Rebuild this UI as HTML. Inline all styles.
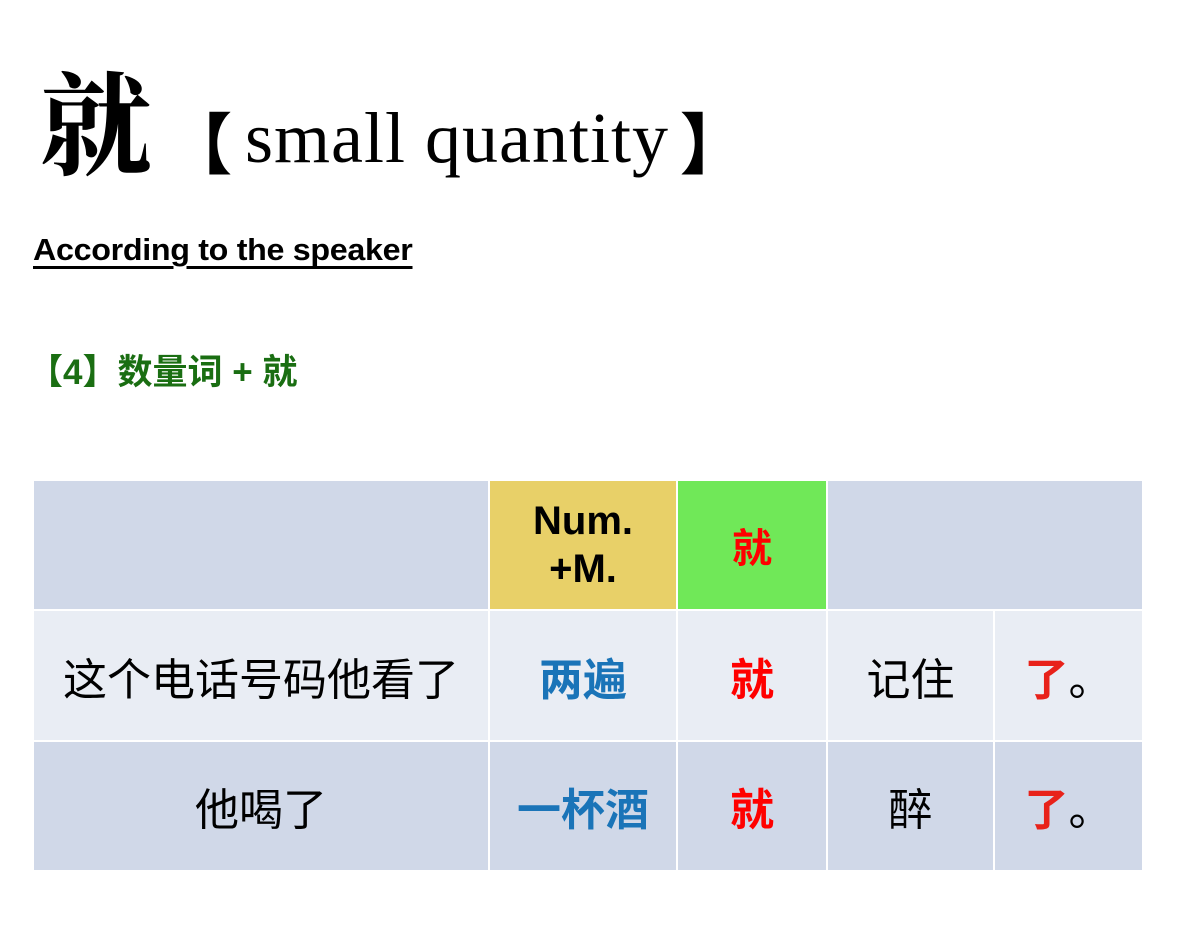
<!DOCTYPE html>
<html><head><meta charset="utf-8"><style>
body{margin:0;width:1182px;height:946px;background:#fff;position:relative;overflow:hidden;font-family:"Liberation Sans","Noto Sans CJK SC",sans-serif}
.a{position:absolute;white-space:nowrap}
.c{position:absolute;display:flex;align-items:center;justify-content:center;text-align:center}
.h{background:#d0d8e8}.l{background:#e9edf4}
.b{color:#1a74b8;font-weight:bold}.r{color:#f00;font-weight:bold}.t{font-size:44px}
</style></head><body>
<div class="a" style="left:40px;top:54px;font-size:112px;line-height:130px;font-family:'Noto Serif CJK SC',serif;font-weight:bold">就</div>
<div class="a" style="left:166px;top:100px;font-size:66px;line-height:80px;font-family:'Noto Sans CJK SC',sans-serif;font-weight:900">【</div>
<div class="a" style="left:245px;top:98px;font-size:72px;line-height:80px;letter-spacing:1px;font-family:'Liberation Serif',serif">small quantity</div>
<div class="a" style="left:680px;top:100px;font-size:66px;line-height:80px;font-family:'Noto Sans CJK SC',sans-serif;font-weight:900">】</div>
<div class="a" style="left:33px;top:232px;font-size:31px;font-weight:bold;text-decoration:underline;text-decoration-thickness:3px;text-underline-offset:6px;letter-spacing:-0.3px;transform:scaleX(1.04);transform-origin:left">According to the speaker</div>
<div class="a" style="left:28px;top:344px;font-size:35px;font-weight:bold;color:#1a6e12">【4】数量词 + 就</div>
<div class="c h" style="left:34px;top:481px;width:454px;height:128px"></div>
<div class="c" style="left:490px;top:481px;width:186px;height:128px;background:#e8d068;font-size:40px;font-weight:bold;line-height:48px">Num.<br>+M.</div>
<div class="c r" style="left:678px;top:481px;width:148px;height:128px;background:#70e858;font-size:40px">就</div>
<div class="c h" style="left:828px;top:481px;width:314px;height:128px"></div>
<div class="c l t" style="left:34px;top:611px;width:454px;height:129px">这个电话号码他看了</div>
<div class="c l t b" style="left:490px;top:611px;width:186px;height:129px">两遍</div>
<div class="c l t r" style="left:678px;top:611px;width:148px;height:129px">就</div>
<div class="c l t" style="left:828px;top:611px;width:165px;height:129px">记住</div>
<div class="c l t" style="left:995px;top:611px;width:147px;height:129px"><span style="color:#e8221a;font-weight:bold">了</span>。</div>
<div class="c h t" style="left:34px;top:742px;width:454px;height:128px">他喝了</div>
<div class="c h t b" style="left:490px;top:742px;width:186px;height:128px">一杯酒</div>
<div class="c h t r" style="left:678px;top:742px;width:148px;height:128px">就</div>
<div class="c h t" style="left:828px;top:742px;width:165px;height:128px">醉</div>
<div class="c h t" style="left:995px;top:742px;width:147px;height:128px"><span style="color:#e8221a;font-weight:bold">了</span>。</div>
</body></html>
